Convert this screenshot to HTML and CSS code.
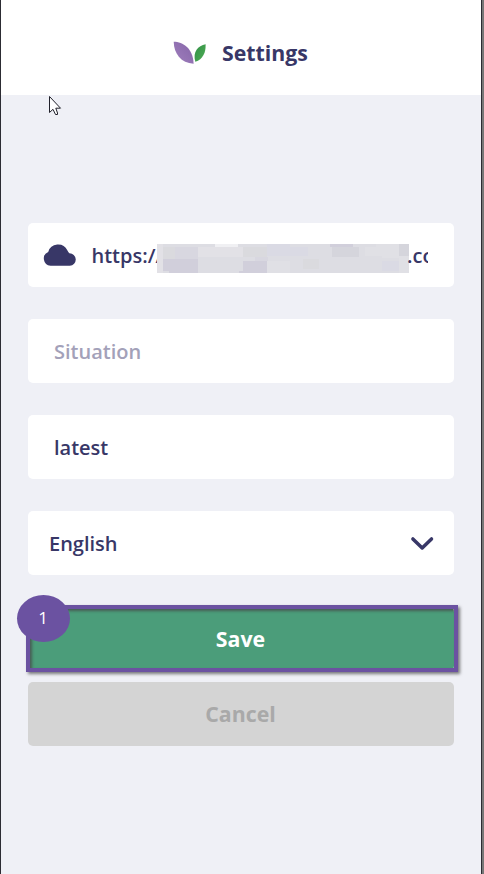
FILE: index.html
```html
<!DOCTYPE html>
<html lang="en">
<head>
<meta charset="utf-8">
<title>Settings</title>
<link rel="stylesheet" href="styles.css">
</head>
<body>
<div class="frame">
  <header class="header">
    <svg class="logo" width="34" height="24" viewBox="0 0 34 24">
      <defs>
        <linearGradient id="purple" x1="0" y1="1" x2="1" y2="0"><stop offset="0" stop-color="#a07fbd"/><stop offset="1" stop-color="#8565a8"/></linearGradient>
        <linearGradient id="green" x1="0" y1="0" x2="1" y2="1"><stop offset="0" stop-color="#2f8f46"/><stop offset="1" stop-color="#51ad55"/></linearGradient>
      </defs>
      <path fill="url(#purple)" d="M.7.8C10 1 20 7 20.600 22.800C8 22 1 13 .7.8Z"/>
      <path fill="url(#green)" d="M32.600 3.200C25 4.500 19.500 11 22.300 20.700C30 18.500 33 11 32.600 3.200Z"/>
    </svg>
    <h1 class="title">Settings</h1>
  </header>
  <main class="form">
    <div class="field field-url">
      <svg class="cloud" width="34" height="23" viewBox="0 0 34 23">
        <path fill="#383767" d="M7.500 21.700A7.200 7.200 0 0 1 5.200 7.900A10.300 10.300 0 0 1 24.300 6.200Q25.300 8 26.300 9.300A6.200 6.200 0 0 1 26.800 21.700Z"/>
      </svg>
      <div class="url">
        <span>https:/</span><span class="slash">/</span>
        <svg class="redaction" width="252" height="29" viewBox="0 0 252 29" shape-rendering="crispEdges">
          <path fill="#dddde3" d="M0 0H252V29H0Z"/>
          <path fill="#e2e1e6" d="M0 0H6V29H0ZM41 3H86V13H41Z"/>
          <path fill="#f0f0f3" d="M58 0H81V3H58Z"/>
          <path fill="#dadade" d="M6 3H18V15H6ZM86 3H110V13H86ZM146 15H162V25H146Z"/>
          <path fill="#d8d7e0" d="M18 3H41V15H18ZM98 13H111V17H98ZM127 3H151V12H127ZM232 17H245V26H232Z"/>
          <path fill="#d1cfdb" d="M6 15H41V29H12V27H6ZM86 17H110V29H82V27H86ZM173 0H196V3H173Z"/>
          <path fill="#d5d5dc" d="M175 3H202V13H175ZM242 0H252V12H242Z"/>
          <path fill="#e0e0e5" d="M110 17H133V29H110ZM219 0H242V14H225V12H208V3H219ZM242 12H252V29H242Z"/>
          <path fill="#dadae4" d="M110 0H133V12H110ZM133 3H151V12H133ZM225 17H242V27H225Z"/>
        </svg>
        <span class="tail">.com</span>
      </div>
    </div>
    <div class="field field-text placeholder">Situation</div>
    <div class="field field-text">latest</div>
    <div class="field field-select">
      <span>English</span>
      <svg width="24" height="15" viewBox="0 0 24 15"><path d="M2.900 2.900L12.200 11.900L21.500 2.900" fill="none" stroke="#383767" stroke-width="3.500" stroke-linecap="round" stroke-linejoin="round"/></svg>
    </div>
    <div class="save-wrap">
      <div class="save">Save</div>
      <div class="highlight"></div>
      <div class="step">1</div>
    </div>
    <div class="cancel">Cancel</div>
  </main>
  <svg class="cursor" width="14" height="21" viewBox="0 0 14 21"><path d="M1.500 1.500V17.500L5 14.300L7.500 19.500H9.500V18L7.800 13.200H12.500Z" fill="#fff" stroke="#20202a" stroke-width="1"/></svg>
</div>
</body>
</html>
```
FILE: styles.css
```css
* { box-sizing: border-box; }
body {
  margin: 0;
  background: #777;
  font-family: "Open Sans", sans-serif;
  font-size: 20px;
  font-weight: 600;
  color: #383767;
}
.frame {
  position: relative;
  width: 482px;
  height: 874px;
  background: #eff0f6;
  border-left: 1px solid #2c2c33;
  border-right: 1px solid #2c2c33;
  overflow: hidden;
}
.header {
  display: flex;
  justify-content: center;
  align-items: center;
  gap: 15px;
  height: 95px;
  padding: 11px 1px 0 0;
  background: #fff;
}
.logo { display: block; }
.title {
  margin: 0;
  font-size: 21.3px;
  font-weight: 700;
  line-height: 28px;
}
.form {
  display: flex;
  flex-direction: column;
  padding: 128px 27px 0 27px;
  width: 480px;
}
.field {
  display: flex;
  align-items: center;
  width: 426px;
  height: 64px;
  margin-bottom: 32px;
  background: #fff;
  border-radius: 5px;
}
.field-url { padding-left: 15px; }
.cloud { flex: none; margin-top: 1px; }
.url {
  position: relative;
  display: flex;
  width: 336.5px;
  height: 40px;
  margin-left: 14.5px;
  line-height: 42px;
  overflow: hidden;
  white-space: nowrap;
}
.redaction { position: absolute; left: 65.5px; top: 9px; }
.tail { position: absolute; left: 315.5px; }
.field-text { padding-left: 26px; }
.placeholder { color: #a3a1b9; }
.field-select { justify-content: space-between; padding: 0 20px 0 21px; }
.save-wrap { position: relative; width: 426px; height: 64px; margin-bottom: 11px; }
.save, .cancel {
  display: flex;
  align-items: center;
  justify-content: center;
  width: 426px;
  height: 64px;
  padding: 0 1px 2px 0;
  border-radius: 5px;
  font-size: 21.3px;
  font-weight: 700;
}
.save { background: #4b9d7a; color: #fff; }
.cancel { background: #d4d4d4; color: #a9a9a9; }
.highlight {
  position: absolute;
  left: -2px;
  top: -2px;
  width: 432px;
  height: 67px;
  border: 4px solid #6b52a1;
  box-shadow: 2px 2px 3px rgba(0,0,0,.5), inset 2px 2px 3px rgba(70,50,60,.6);
}
.step {
  position: absolute;
  left: -11px;
  top: -12px;
  width: 53px;
  height: 47px;
  padding-right: 1px;
  border-radius: 50%;
  background: #6b52a1;
  color: #fff;
  font: 400 17px/45px "Open Sans", sans-serif;
  text-align: center;
}
.cursor { position: absolute; left: 47px; top: 95px; }
```
